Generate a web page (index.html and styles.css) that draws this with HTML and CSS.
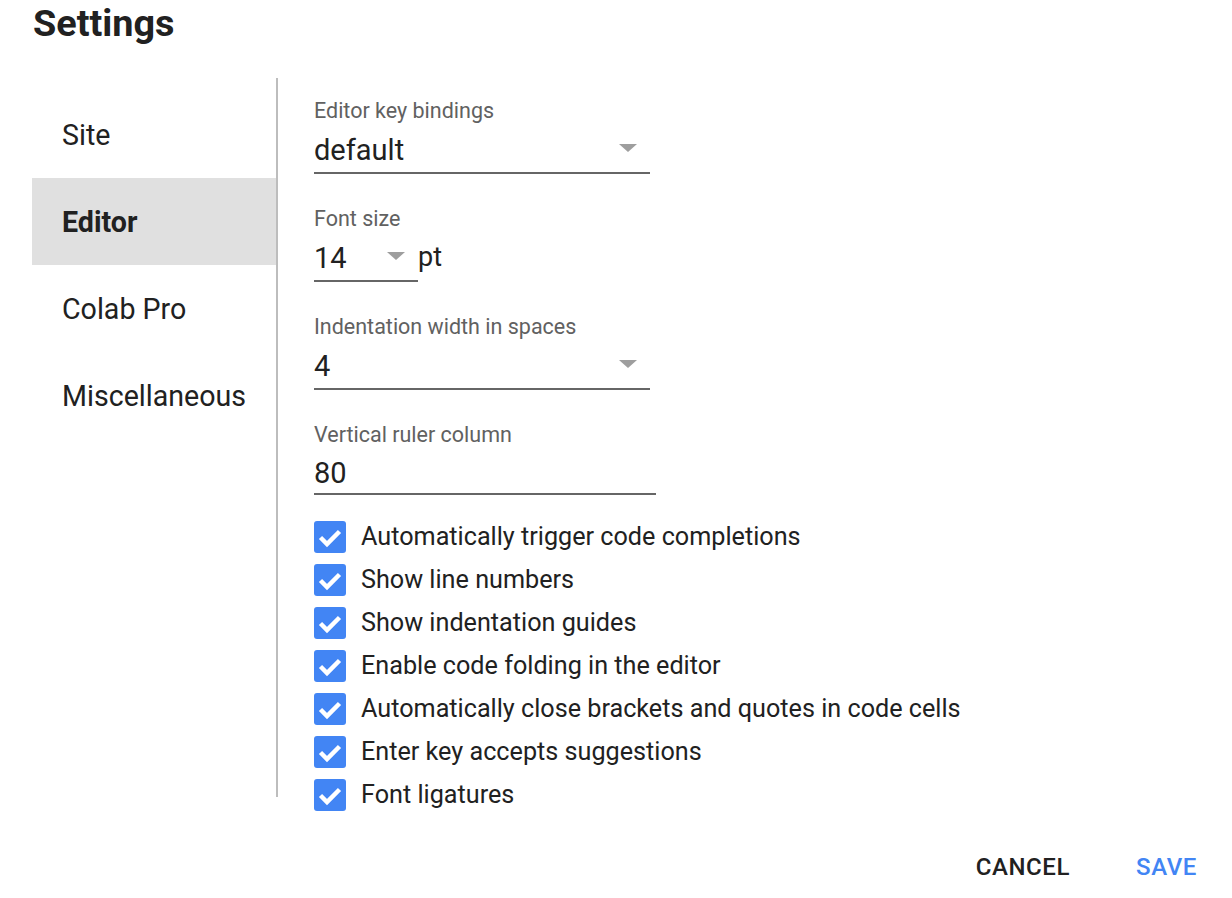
FILE: index.html
```html
<!DOCTYPE html>
<html>
<head>
<meta charset="utf-8">
<link rel="stylesheet" href="styles.css">
</head>
<body>
<div class="dialog">
  <h1 class="title">Settings</h1>
  <div class="main">
    <nav class="sidebar">
      <div class="nav-item">Site</div>
      <div class="nav-item active">Editor</div>
      <div class="nav-item">Colab Pro</div>
      <div class="nav-item">Miscellaneous</div>
    </nav>
    <div class="content">
      <div class="field">
        <div class="label">Editor key bindings</div>
        <div class="select wide"><span class="value">default</span><span class="arrow"></span></div>
      </div>
      <div class="field">
        <div class="label">Font size</div>
        <div class="inline">
          <div class="select narrow"><span class="value">14</span><span class="arrow"></span></div>
          <span class="unit">pt</span>
        </div>
      </div>
      <div class="field">
        <div class="label">Indentation width in spaces</div>
        <div class="select wide"><span class="value">4</span><span class="arrow"></span></div>
      </div>
      <div class="field">
        <div class="label">Vertical ruler column</div>
        <div class="input"><span class="value">80</span></div>
      </div>
      <ul class="checks">
        <li class="check"><span class="box"><svg viewBox="0 0 32 32" width="32" height="32"><path d="M6.5 16.5l6.5 6.5 12.5-12.5" fill="none" stroke="#fff" stroke-width="4.5"/></svg></span>Automatically trigger code completions</li>
        <li class="check"><span class="box"><svg viewBox="0 0 32 32" width="32" height="32"><path d="M6.5 16.5l6.5 6.5 12.5-12.5" fill="none" stroke="#fff" stroke-width="4.5"/></svg></span>Show line numbers</li>
        <li class="check"><span class="box"><svg viewBox="0 0 32 32" width="32" height="32"><path d="M6.5 16.5l6.5 6.5 12.5-12.5" fill="none" stroke="#fff" stroke-width="4.5"/></svg></span>Show indentation guides</li>
        <li class="check"><span class="box"><svg viewBox="0 0 32 32" width="32" height="32"><path d="M6.5 16.5l6.5 6.5 12.5-12.5" fill="none" stroke="#fff" stroke-width="4.5"/></svg></span>Enable code folding in the editor</li>
        <li class="check"><span class="box"><svg viewBox="0 0 32 32" width="32" height="32"><path d="M6.5 16.5l6.5 6.5 12.5-12.5" fill="none" stroke="#fff" stroke-width="4.5"/></svg></span>Automatically close brackets and quotes in code cells</li>
        <li class="check"><span class="box"><svg viewBox="0 0 32 32" width="32" height="32"><path d="M6.5 16.5l6.5 6.5 12.5-12.5" fill="none" stroke="#fff" stroke-width="4.5"/></svg></span>Enter key accepts suggestions</li>
        <li class="check"><span class="box"><svg viewBox="0 0 32 32" width="32" height="32"><path d="M6.5 16.5l6.5 6.5 12.5-12.5" fill="none" stroke="#fff" stroke-width="4.5"/></svg></span>Font ligatures</li>
      </ul>
    </div>
  </div>
  <div class="actions">
    <button class="btn cancel">CANCEL</button>
    <button class="btn save">SAVE</button>
  </div>
</div>
</body>
</html>
```

FILE: styles.css
```css
html, body {
  margin: 0;
  padding: 0;
  background: #fff;
}
body {
  font-family: Roboto, "Liberation Sans", sans-serif;
  color: #212121;
}
.dialog {
  width: 1232px;
  height: 898px;
}
.title {
  margin: 0;
  padding: 0 0 0 33px;
  font-size: 37.8px;
  font-weight: 700;
  line-height: 46px;
  height: 78px;
  color: #212121;
}
.main {
  display: flex;
  height: 719px;
}
.sidebar {
  margin-left: 32px;
  width: 244px;
  border-right: 2px solid #bdbdbd;
  padding-top: 13px;
  box-sizing: content-box;
}
.nav-item {
  height: 87px;
  display: flex;
  align-items: center;
  padding-left: 30px;
  font-size: 28.6px;
  color: #212121;
}
.nav-item.active {
  background: #e0e0e0;
  font-weight: 700;
}
.content {
  padding-left: 36px;
  padding-top: 21px;
}
.field {
  margin-bottom: 33px;
}
.label {
  font-size: 21.5px;
  line-height: 24px;
  color: #616161;
}
.select, .input {
  display: flex;
  align-items: center;
  height: 45px;
  padding-top: 4px;
  border-bottom: 2px solid #666;
  font-size: 29px;
  color: #212121;
  box-sizing: content-box;
}
.value {
  flex: 1;
  line-height: 34px;
}
.wide {
  width: 336px;
}
.narrow {
  width: 104px;
}
.input {
  width: 342px;
  height: 41px;
  padding-top: 5px;
}
.input .value {
  line-height: 32px;
}
.arrow {
  width: 0;
  height: 0;
  border-left: 9px solid transparent;
  border-right: 9px solid transparent;
  border-top: 8px solid #9e9e9e;
  margin-right: 13px;
  margin-top: -3px;
}
.inline {
  display: flex;
  align-items: flex-start;
}
.unit {
  font-size: 27px;
  line-height: 34px;
  padding-top: 9px;
}
.checks {
  list-style: none;
  margin: -13px 0 0 0;
  padding: 0;
}
.check {
  height: 43px;
  display: flex;
  align-items: center;
  font-size: 25.2px;
  color: #212121;
}
.box {
  width: 32px;
  height: 32px;
  border-radius: 3px;
  background: #4285f4;
  margin-right: 15px;
  display: flex;
}
.actions {
  display: flex;
  justify-content: flex-end;
  gap: 42px;
  padding-right: 23px;
  margin-top: 50px;
}
.btn {
  background: none;
  border: none;
  font-family: Roboto, "Liberation Sans", sans-serif;
  font-size: 24px;
  font-weight: 500;
  letter-spacing: 0.6px;
  padding: 8px 12px;
  line-height: 24px;
  cursor: pointer;
}
.cancel {
  color: #212121;
}
.save {
  color: #4285f4;
}
```
